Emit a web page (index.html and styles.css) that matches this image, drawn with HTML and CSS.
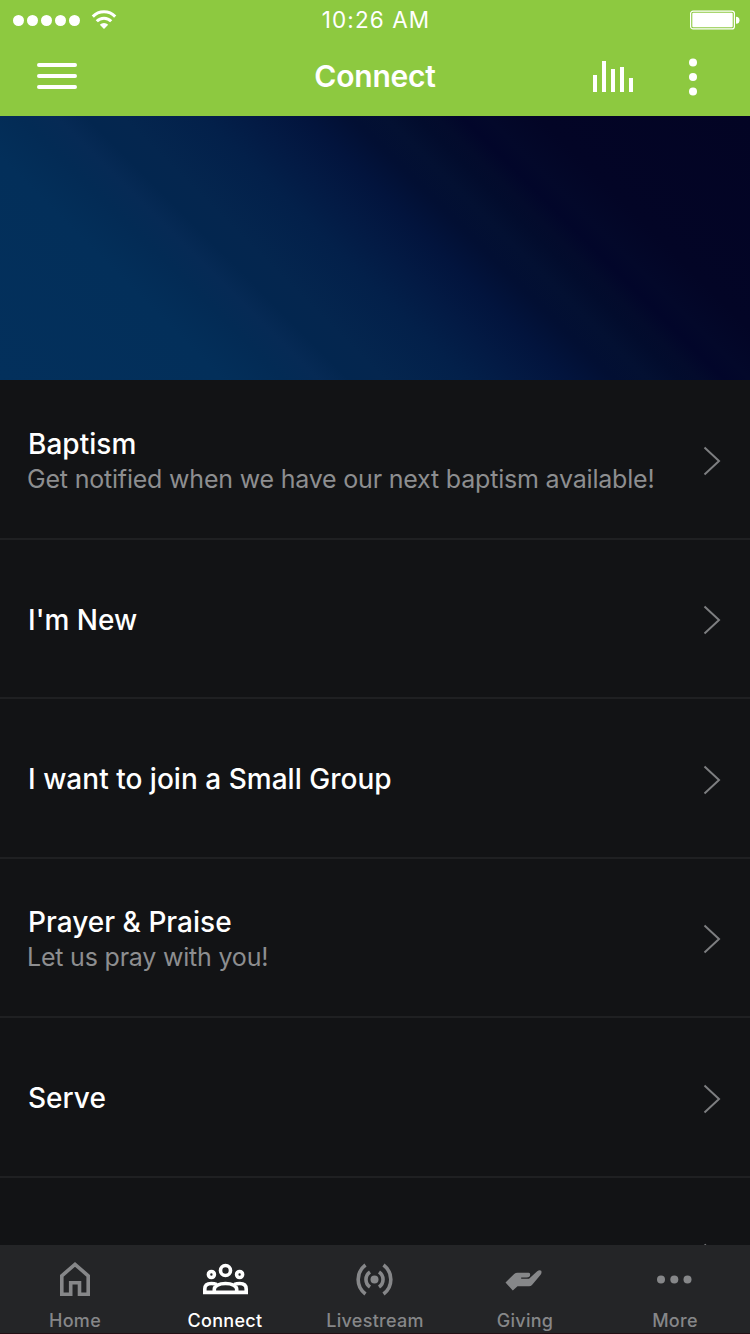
FILE: index.html
```html
<!DOCTYPE html>
<html lang="en">
<head>
<meta charset="utf-8">
<title>Connect</title>
<link rel="stylesheet" href="styles.css">
</head>
<body>
<div class="app">
  <header class="header">
    <div class="status">
      <svg class="signal" width="106" height="20" viewBox="0 0 106 20" fill="#fff">
        <circle cx="6.500" cy="10.500" r="5.500"/><circle cx="20.500" cy="10.500" r="5.500"/><circle cx="34.500" cy="10.500" r="5.500"/><circle cx="48.500" cy="10.500" r="5.500"/><circle cx="62.500" cy="10.500" r="5.500"/>
        <g fill="none" stroke="#fff" stroke-width="3"><path d="M80.800 6.600a15.500 15.500 0 0 1 22.400 0"/><path d="M84.800 11.200a10 10 0 0 1 14.400 0"/></g>
        <path d="M92 19l-4.200-4.300a6.200 6.200 0 0 1 8.400 0z"/>
      </svg>
      <span class="time">10:26 AM</span>
      <svg class="battery" width="50" height="20" viewBox="0 0 50 20">
        <rect x=".6" y="1.100" width="43.800" height="17.800" rx="2.500" fill="none" stroke="#fff" stroke-width="1.200"/>
        <rect x="2.300" y="2.800" width="40.400" height="14.400" rx="1" fill="#fff"/>
        <path d="M46 6.800a3.500 3.500 0 0 1 0 7z" fill="#fff"/>
      </svg>
    </div>
    <div class="nav">
      <svg class="menu" width="40" height="26" viewBox="0 0 40 26" stroke="#fff" stroke-width="3.800" stroke-linecap="round"><path d="M1.900 2h36.200M1.900 13h36.200M1.900 24h36.200"/></svg>
      <h1 class="title">Connect</h1>
      <div class="actions">
        <svg width="41" height="31" viewBox="0 0 41 31" fill="#fff"><path d="M0 14h4v17H0zM9 0h4v31H9zM18 8h4v23h-4zM27 6h4v25h-4zM36 17h4v14h-4z"/></svg>
        <svg width="8" height="38" viewBox="0 0 8 38" fill="#fff"><circle cx="4" cy="4.500" r="4"/><circle cx="4" cy="19" r="4"/><circle cx="4" cy="33.500" r="4"/></svg>
      </div>
    </div>
  </header>
  <div class="hero"></div>
  <main class="list">
    <div class="row"><div class="text detailed"><div class="name">Baptism</div><div class="desc">Get notified when we have our next baptism available!</div></div><svg class="chev" viewBox="0 0 18 30"><path d="M1.500 1.500L16 15 1.500 28.500"/></svg></div>
    <div class="row"><div class="text"><div class="name">I'm New</div></div><svg class="chev" viewBox="0 0 18 30"><path d="M1.500 1.500L16 15 1.500 28.500"/></svg></div>
    <div class="row"><div class="text"><div class="name">I want to join a Small Group</div></div><svg class="chev" viewBox="0 0 18 30"><path d="M1.500 1.500L16 15 1.500 28.500"/></svg></div>
    <div class="row"><div class="text detailed"><div class="name">Prayer &amp; Praise</div><div class="desc">Let us pray with you!</div></div><svg class="chev" viewBox="0 0 18 30"><path d="M1.500 1.500L16 15 1.500 28.500"/></svg></div>
    <div class="row"><div class="text"><div class="name">Serve</div></div><svg class="chev" viewBox="0 0 18 30"><path d="M1.500 1.500L16 15 1.500 28.500"/></svg></div>
    <div class="row"><div class="text"></div><svg class="chev" viewBox="0 0 18 30"><path d="M1.500 1.500L16 15 1.500 28.500"/></svg></div>
  </main>
  <nav class="tabs">
    <div class="tab">
      <svg width="50" height="40" viewBox="0 0 50 40" fill="none" stroke="currentColor" stroke-width="3.600"><path d="M11.800 34.200V15.800L25 4.300l13.200 11.500v18.400h-8.700V22.800h-8.800v11.400z"/></svg>
      <span>Home</span>
    </div>
    <div class="tab active">
      <svg width="50" height="40" viewBox="0 0 50 40" fill="none" stroke="currentColor" stroke-width="3.600"><circle cx="25.500" cy="10.500" r="5"/><circle cx="11.400" cy="14.500" r="3"/><circle cx="39.600" cy="14.500" r="3"/><path d="M14.300 32.500v-3.300c0-3.200 4.700-5.700 11.200-5.700s11.200 2.500 11.200 5.700v3.300M16.500 24.500c-1.500-.7-3.200-1-5.300-1-4.200 0-6.400 2-6.400 5.500v3.400h41.400V29c0-3.500-2.200-5.500-6.400-5.500-2.100 0-3.800.3-5.300 1"/></svg>
      <span>Connect</span>
    </div>
    <div class="tab">
      <svg width="50" height="40" viewBox="0 0 50 40" fill="none" stroke="currentColor" stroke-width="3.600"><circle cx="24.500" cy="19.500" r="4" fill="currentColor" stroke="none"/><path d="M20 12a9 9 0 0 0 0 15M29 12a9 9 0 0 1 0 15M15.500 5a18 18 0 0 0 0 29M33.500 5a18 18 0 0 1 0 29"/></svg>
      <span>Livestream</span>
    </div>
    <div class="tab">
      <svg width="50" height="40" viewBox="0 0 50 40" fill="currentColor"><path d="M5.500 22.500l8.700-8.500q1.400-1.300 3.300-1.300h11.200q1.500 0 1.500 1.600 0 3.200-3.500 3.200h-5.500v1.300h7.800l8.200-7.500q2-1.500 4-.6.900 2.300-.6 4L32 25q-1.200 1.200-3 1.200H17.500l-4.700 4.300z"/></svg>
      <span>Giving</span>
    </div>
    <div class="tab">
      <svg width="50" height="40" viewBox="0 0 50 40" fill="currentColor"><circle cx="11" cy="19.500" r="4"/><circle cx="24.300" cy="19.500" r="4"/><circle cx="37.500" cy="19.500" r="4"/></svg>
      <span>More</span>
    </div>
  </nav>
</div>
</body>
</html>
```
FILE: styles.css
```css
* { box-sizing: border-box; }
body { margin: 0; background: #121315; font-family: Inter, "Noto Sans", sans-serif; color: #fff; }
.app { width: 750px; height: 1334px; overflow: hidden; display: flex; flex-direction: column; }
.header { flex: none; height: 116px; background: #8dc940; }
.status { height: 40px; display: grid; grid-template-columns: 1fr auto 1fr; align-items: center; padding: 0 10px 0 12px; }
.time { font-size: 22.500px; line-height: 40px; letter-spacing: 1.100px; }
.battery { justify-self: end; }
.nav { height: 72px; display: grid; grid-template-columns: 1fr auto 1fr; align-items: center; padding: 0 53px 0 37px; }
.title { margin: 0; font-size: 30px; line-height: 36px; font-weight: 600; letter-spacing: -.2px; padding-left: 16px; }
.actions { justify-self: end; display: flex; align-items: center; gap: 55px; padding-top: 1px; }
.menu { margin-top: 0; }
.hero {
  flex: none; height: 264px;
  background: linear-gradient(45deg, #03305c 0%, #032f5a 22%, #032b55 28%, #062a55 31.500%, #03264f 34.500%, #04264f 38%, #03204a 46%, #031a44 51%, #02143d 56%, #020f33 60.500%, #031032 64%, #020c2d 67%, #030b2c 69%, #02062a 71.500%, #03082a 74%, #030526 79%, #030424 100%);
}
.list { flex: 1; min-height: 0; overflow: hidden; }
.row { height: 159.500px; display: flex; align-items: center; justify-content: space-between; padding: 4px 29px 0 28px; border-bottom: 2px solid #1f2022; }
.detailed { padding-top: 1px; }
.name { font-size: 28px; line-height: 35px; font-weight: 500; letter-spacing: .02px; }
.desc { font-size: 25px; line-height: 34px; color: #8d8e90; letter-spacing: -.2px; margin-left: -1px; }
.chev { flex: none; width: 18px; height: 30px; fill: none; stroke: #7d7e80; stroke-width: 2; }
.tabs { flex: none; height: 89px; background: #242527; border-bottom: 1px solid #220f14; display: grid; grid-template-columns: repeat(5, 1fr); }
.tab { display: flex; flex-direction: column; align-items: center; padding-top: 15px; color: #868789; font-size: 18px; line-height: 24px; font-weight: 500; letter-spacing: .3px; gap: 9px; }
.tab svg { flex: none; }
.tab.active { color: #fff; }
```
